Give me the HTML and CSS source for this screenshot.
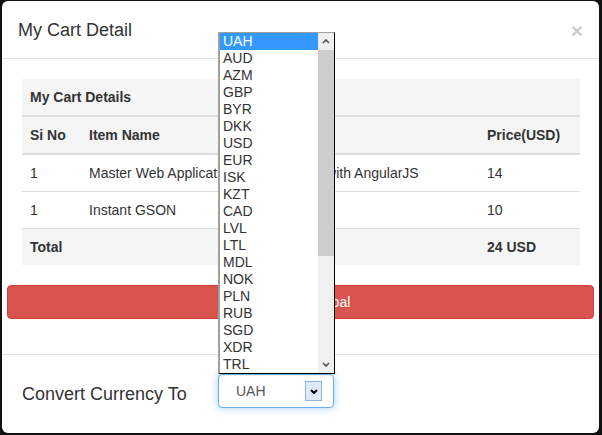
FILE: index.html
```html
<!DOCTYPE html>
<html>
<head>
<meta charset="utf-8">
<title>My Cart Detail</title>
<link rel="stylesheet" href="styles.css">
</head>
<body>
<div class="modal">
  <div class="modal-header">
    <h4 class="modal-title">My Cart Detail</h4>
    <button class="close" type="button">×</button>
  </div>
  <div class="modal-body">
    <table class="cart">
      <colgroup><col class="c1"><col class="c2"><col class="c3"></colgroup>
      <thead>
        <tr class="shade caption-row"><th colspan="3">My Cart Details</th></tr>
        <tr class="shade"><th>Si No</th><th>Item Name</th><th>Price(USD)</th></tr>
      </thead>
      <tbody>
        <tr><td>1</td><td>Master Web Application Development with AngularJS</td><td>14</td></tr>
        <tr><td>1</td><td>Instant GSON</td><td>10</td></tr>
        <tr class="shade"><th>Total</th><th></th><th>24 USD</th></tr>
      </tbody>
    </table>
    <button class="btn-pay" type="button">Pay with Paypal</button>
  </div>
  <div class="modal-footer">
    <label class="convert-label">Convert Currency To</label>
    <div class="select-wrap">
      <div class="select">
        <span class="select-value">UAH</span>
        <span class="select-arrow"><svg width="8" height="5" viewBox="0 0 8 5"><path d="M1 1 L4 4 L7 1" stroke="#000" stroke-width="2" fill="none"/></svg></span>
      </div>
      <div class="dropdown">
        <div class="options">
          <div class="opt selected">UAH</div>
          <div class="opt">AUD</div>
          <div class="opt">AZM</div>
          <div class="opt">GBP</div>
          <div class="opt">BYR</div>
          <div class="opt">DKK</div>
          <div class="opt">USD</div>
          <div class="opt">EUR</div>
          <div class="opt">ISK</div>
          <div class="opt">KZT</div>
          <div class="opt">CAD</div>
          <div class="opt">LVL</div>
          <div class="opt">LTL</div>
          <div class="opt">MDL</div>
          <div class="opt">NOK</div>
          <div class="opt">PLN</div>
          <div class="opt">RUB</div>
          <div class="opt">SGD</div>
          <div class="opt">XDR</div>
          <div class="opt">TRL</div>
        </div>
        <div class="scrollbar">
          <div class="sb-btn"><svg width="8" height="5" viewBox="0 0 8 5"><path d="M1 4 L4 1 L7 4" stroke="#505050" stroke-width="1.6" fill="none"/></svg></div>
          <div class="sb-thumb"></div>
          <div class="sb-track"></div>
          <div class="sb-btn"><svg width="8" height="5" viewBox="0 0 8 5"><path d="M1 1 L4 4 L7 1" stroke="#505050" stroke-width="1.6" fill="none"/></svg></div>
        </div>
      </div>
    </div>
  </div>
</div>
</body>
</html>
```

FILE: styles.css
```css
* { box-sizing: border-box; }
html, body {
  margin: 0;
  padding: 0;
  height: 435px;
  overflow: hidden;
}
body {
  background: #111;
  font-family: "Liberation Sans", Arial, sans-serif;
  font-size: 14px;
  line-height: 20px;
  color: #333;
  padding: 1px 3px 2px 2px;
}
.modal {
  background: #fff;
  width: 597px;
  height: 432px;
  border-radius: 6px;
  display: flex;
  flex-direction: column;
}
.modal-header {
  display: flex;
  align-items: center;
  justify-content: space-between;
  padding: 16px 16px 15px 16px;
  border-bottom: 1px solid #e5e5e5;
}
.modal-title {
  margin: 0;
  font-size: 18px;
  font-weight: normal;
  line-height: 26px;
}
.close {
  background: none;
  border: 0;
  padding: 0;
  font-family: "Liberation Sans", Arial, sans-serif;
  font-size: 21px;
  font-weight: bold;
  line-height: 1;
  color: #000;
  opacity: 0.2;
}
.modal-body {
  padding: 20px 19px 35px 20px;
}
.cart {
  width: 558px;
  border-collapse: collapse;
  table-layout: fixed;
  margin-bottom: 20px;
}
.c1 { width: 59px; }
.c2 { width: 398px; }
.c3 { width: 101px; }
.cart th, .cart td {
  padding: 8px;
  line-height: 20px;
  text-align: left;
  border-top: 1px solid #ddd;
  vertical-align: top;
}
.cart th { font-weight: bold; }
.cart thead th { border-bottom: 2px solid #ddd; }
.cart thead .caption-row th { border-top: 0; }
.shade { background: #f5f5f5; }
.btn-pay {
  display: block;
  width: 587px;
  height: 34px;
  margin-left: -15px;
  padding: 6px 12px;
  border: 1px solid #d43f3a;
  border-radius: 4px;
  background: #d9534f;
  color: #fff;
  font-family: "Liberation Sans", Arial, sans-serif;
  font-size: 14px;
  line-height: 20px;
  text-align: center;
}
.modal-footer {
  flex: 1;
  display: flex;
  align-items: flex-start;
  border-top: 1px solid #e5e5e5;
  padding: 19px 15px 0 20px;
}
.convert-label {
  width: 196px;
  margin-top: 7px;
  font-size: 18px;
  line-height: 26px;
}
.select-wrap {
  position: relative;
}
.select {
  width: 116px;
  height: 34px;
  display: flex;
  align-items: center;
  justify-content: space-between;
  padding: 0 11px 0 17px;
  border: 1px solid #66afe9;
  border-radius: 4px;
  box-shadow: inset 0 1px 1px rgba(0,0,0,.075), 0 0 8px rgba(102,175,233,.6);
  color: #555;
  background: #fff;
}
.select-arrow {
  width: 17px;
  height: 20px;
  border: 1px solid #8fb3dc;
  background: #dceafb;
  display: flex;
  align-items: center;
  justify-content: center;
}
.dropdown {
  position: absolute;
  left: 0;
  bottom: 100%;
  width: 117px;
  height: 342px;
  display: flex;
  background: #fff;
  border-style: solid;
  border-width: 1px 1px 1px 2px;
  border-color: #a0a0a0 #000 #000 #a0a0a0;
}
.options {
  flex: 1;
}
.opt {
  height: 17px;
  line-height: 17px;
  padding-left: 3px;
  color: #333;
  font-size: 14px;
}
.opt.selected {
  background: #3399ff;
  color: #fff;
}
.scrollbar {
  width: 16px;
  display: flex;
  flex-direction: column;
  background: #f0f0f0;
}
.sb-btn {
  height: 17px;
  display: flex;
  align-items: center;
  justify-content: center;
}
.sb-thumb {
  height: 206px;
  background: #cdcdcd;
}
.sb-track {
  flex: 1;
}
```
